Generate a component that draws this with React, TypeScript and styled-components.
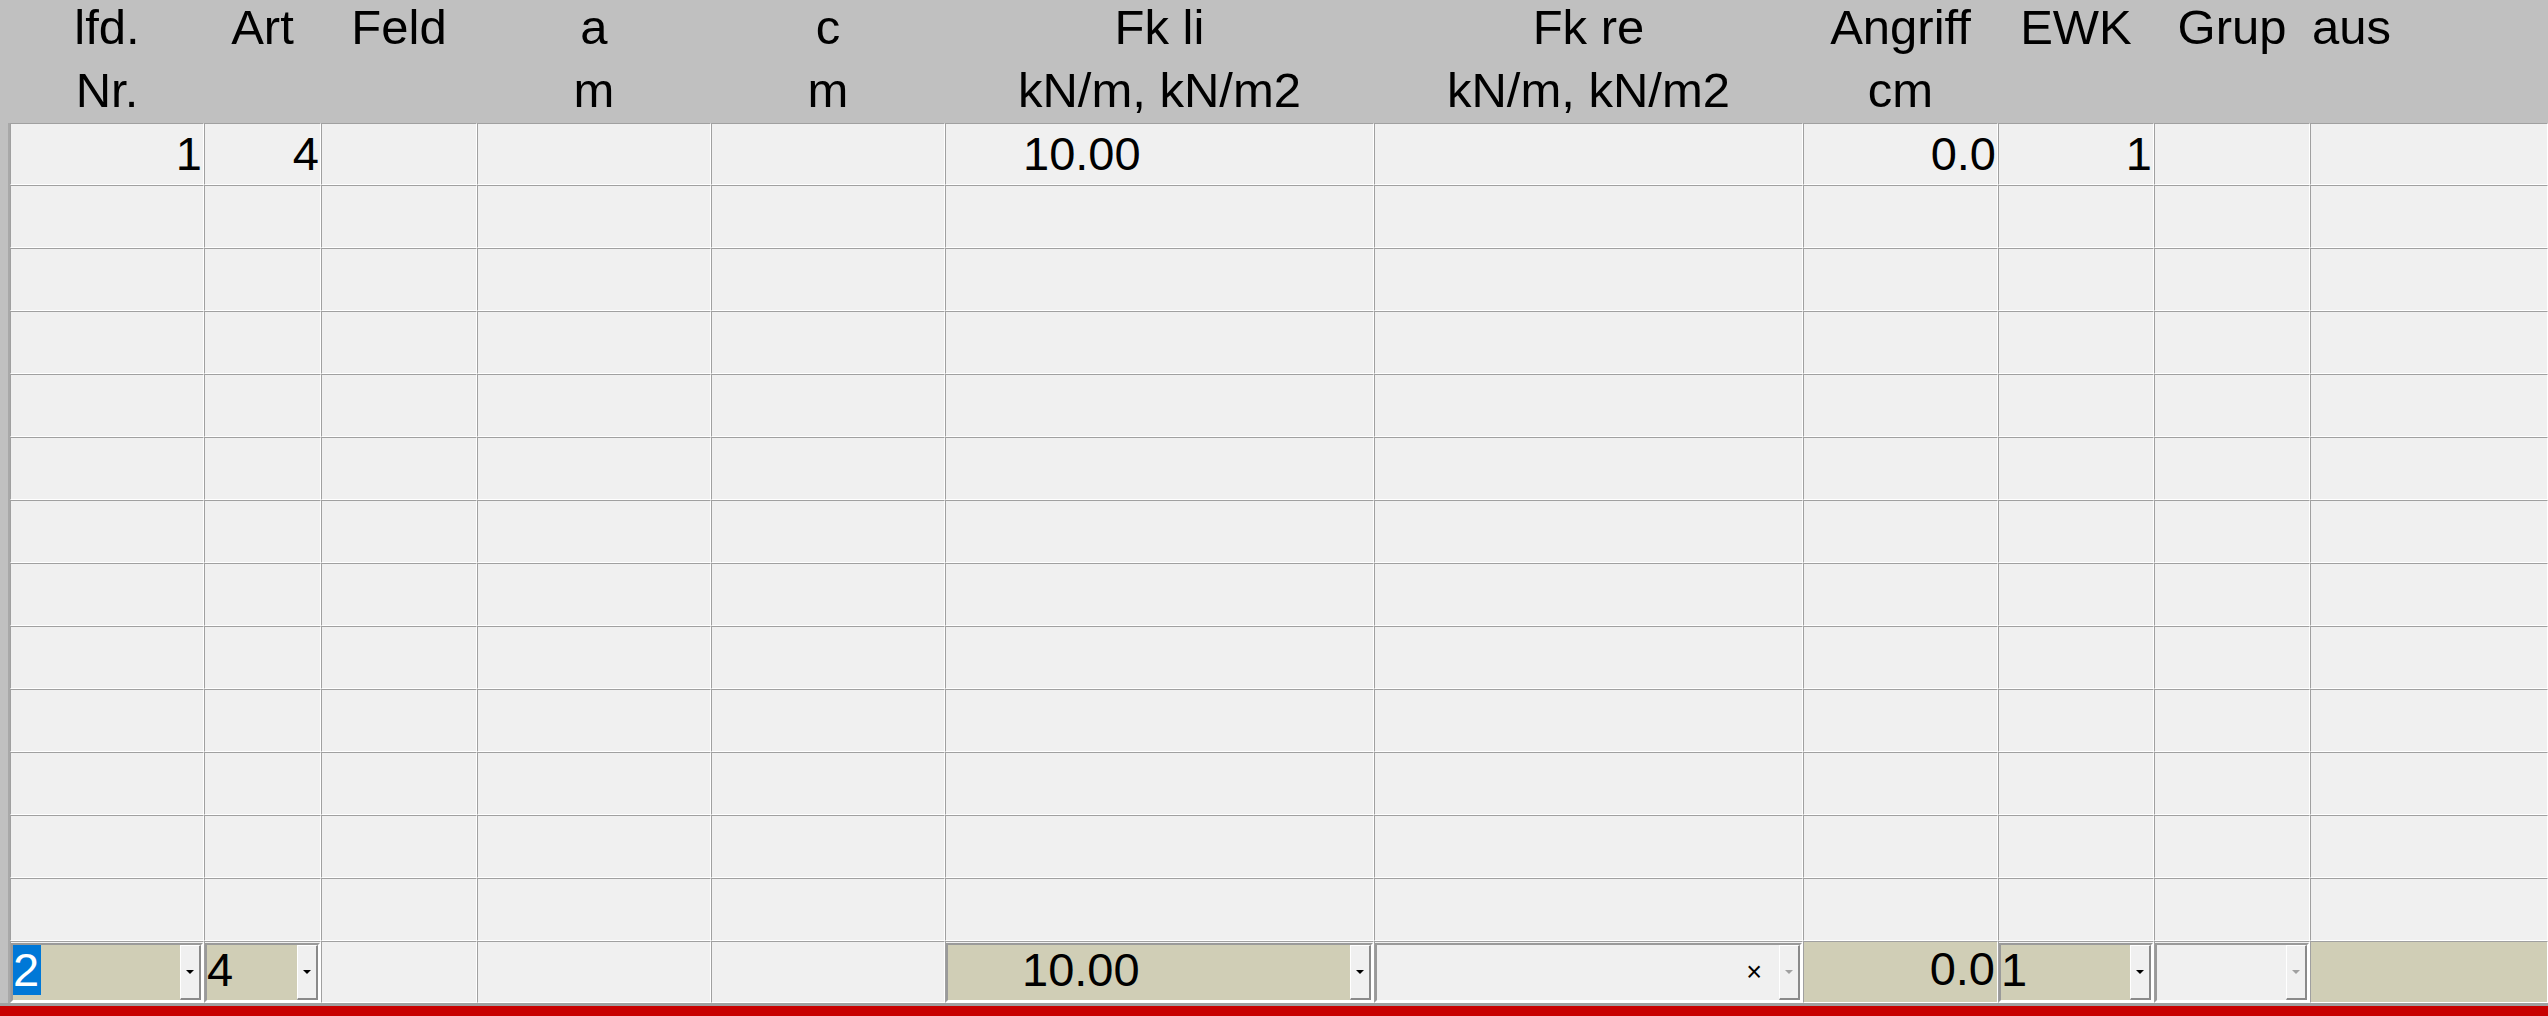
import React from "react";
import styled, { createGlobalStyle } from "styled-components";

const GlobalStyle = createGlobalStyle`
  html, body {
    margin: 0;
    padding: 0;
    background: #f0f0f0;
    overflow: hidden;
  }
  body {
    font-family: "Liberation Sans", Arial, sans-serif;
  }
`;

const COLS =
  "10px 194px 117px 156px 234px 234px 429px 429px 195px 156px 156px 1fr";

const BEIGE = "#d0ceb6";
const FACE = "#f0f0f0";
const LINE = "#a0a0a0";

const Screen = styled.div`
  width: 2548px;
  height: 1016px;
  display: flex;
  flex-direction: column;
  font-family: "Liberation Sans", Arial, sans-serif;
  font-size: 47px;
  color: #000;
  background: ${FACE};
  overflow: hidden;
`;

const HeaderRow = styled.div`
  display: grid;
  grid-template-columns: ${COLS};
  height: 123px;
  background: #c0c0c0;
  flex: none;
`;

const HeaderCell = styled.div<{ $align?: "left" | "center" }>`
  display: flex;
  flex-direction: column;
  align-items: ${(p) => (p.$align === "left" ? "flex-start" : "center")};
  padding-left: ${(p) => (p.$align === "left" ? 2 : 0)}px;
  font-size: 49px;
  line-height: 63px;
  margin-top: -4px;
  white-space: nowrap;
  overflow: visible;
`;

const Row = styled.div<{ $height: number }>`
  display: grid;
  grid-template-columns: ${COLS};
  height: ${(p) => p.$height}px;
  flex: none;
`;

const Handle = styled.div`
  background: #c0c0c0;
  box-shadow: inset -2px 0 0 #a8a8a8;
`;

const Cell = styled.div<{ $align?: "left" | "right"; $padLeft?: number }>`
  box-sizing: border-box;
  border-top: 1px solid ${LINE};
  border-bottom: 1px solid #fff;
  border-left: 1px solid ${LINE};
  border-right: 1px solid #fff;
  background: ${FACE};
  display: flex;
  align-items: center;
  justify-content: ${(p) => (p.$align === "left" ? "flex-start" : "flex-end")};
  padding: 0 1px 0 ${(p) => p.$padLeft ?? 0}px;
  line-height: 52px;
  white-space: nowrap;
  overflow: hidden;
`;

const EditCell = styled.div<{ $fill?: boolean }>`
  box-sizing: border-box;
  border-top: 1px solid ${LINE};
  border-bottom: 1px solid #fff;
  border-left: 1px solid ${LINE};
  border-right: 1px solid #fff;
  background: ${(p) => (p.$fill ? BEIGE : FACE)};
  display: flex;
  padding: 1px 0 0 0;
  white-space: nowrap;
  overflow: hidden;
`;

const Combo = styled.div`
  flex: 1;
  display: flex;
  border-style: solid;
  border-width: 2px;
  border-color: #9a9a9a #fff #fff #9a9a9a;
  min-width: 0;
`;

const ComboField = styled.div<{
  $tone: "beige" | "plain";
  $align?: "left" | "right";
  $padLeft?: number;
  $padRight?: number;
}>`
  flex: 1;
  display: flex;
  align-items: flex-start;
  justify-content: ${(p) => (p.$align === "right" ? "flex-end" : "flex-start")};
  background: ${(p) => (p.$tone === "beige" ? BEIGE : FACE)};
  padding: 0 ${(p) => p.$padRight ?? 0}px 0 ${(p) => p.$padLeft ?? 0}px;
  line-height: 50px;
  min-width: 0;
`;

const Value = styled.span<{ $selected?: boolean }>`
  display: inline-block;
  height: 50px;
  line-height: 50px;
  padding-right: ${(p) => (p.$selected ? 2 : 0)}px;
  background: ${(p) => (p.$selected ? "#0078d7" : "transparent")};
  color: ${(p) => (p.$selected ? "#fff" : "#000")};
`;

const Clear = styled.span`
  align-self: center;
  font-size: 27px;
  line-height: 27px;
  color: #000;
`;

const DropButton = styled.div`
  box-sizing: border-box;
  width: 21px;
  flex: none;
  background: ${FACE};
  border-top: 1px solid #fff;
  border-left: 1px solid #fff;
  border-right: 2px solid #8a8a8a;
  border-bottom: 2px solid #8a8a8a;
  display: flex;
  align-items: center;
  justify-content: center;
`;

const Arrow = styled.span<{ $disabled?: boolean }>`
  width: 0;
  height: 0;
  border-left: 4px solid transparent;
  border-right: 4px solid transparent;
  border-top: 4px solid ${(p) => (p.$disabled ? "#a0a0a0" : "#000")};
`;

const PlainField = styled.div<{ $align?: "left" | "right" }>`
  flex: 1;
  display: flex;
  align-items: flex-start;
  justify-content: ${(p) => (p.$align === "right" ? "flex-end" : "flex-start")};
  padding: 0 2px 0 0;
  line-height: 52px;
`;

const Footer = styled.div`
  flex: 1;
  border-top: 3px solid #a0a0a0;
  background: #c80000;
`;

type Col = {
  id: string;
  h1: string;
  h2?: string;
  headAlign?: "left" | "center";
};

const columns: Col[] = [
  { id: "nr", h1: "lfd.", h2: "Nr." },
  { id: "art", h1: "Art" },
  { id: "feld", h1: "Feld" },
  { id: "a", h1: "a", h2: "m" },
  { id: "c", h1: "c", h2: "m" },
  { id: "fkli", h1: "Fk li", h2: "kN/m, kN/m2" },
  { id: "fkre", h1: "Fk re", h2: "kN/m, kN/m2" },
  { id: "angriff", h1: "Angriff", h2: "cm" },
  { id: "ewk", h1: "EWK" },
  { id: "grup", h1: "Grup" },
  { id: "aus", h1: "aus", headAlign: "left" },
];

type RowData = Partial<Record<string, string>>;

const rows: RowData[] = [
  { nr: "1", art: "4", fkli: "10.00", angriff: "0.0", ewk: "1" },
  ...Array.from({ length: 12 }, () => ({})),
];

const cellAlign = (id: string): { align: "left" | "right"; pad: number } => {
  if (id === "fkli") return { align: "left", pad: 77 };
  return { align: "right", pad: 0 };
};

function ComboBox(props: {
  value?: string;
  tone: "beige" | "plain";
  align?: "left" | "right";
  padLeft?: number;
  selected?: boolean;
  disabled?: boolean;
  clear?: boolean;
}) {
  return (
    <Combo>
      <ComboField
        $tone={props.tone}
        $align={props.clear ? "right" : props.align}
        $padLeft={props.padLeft}
        $padRight={props.clear ? 17 : 0}
      >
        {props.clear ? (
          <Clear>×</Clear>
        ) : props.value ? (
          <Value $selected={props.selected}>{props.value}</Value>
        ) : null}
      </ComboField>
      <DropButton>
        <Arrow $disabled={props.disabled} />
      </DropButton>
    </Combo>
  );
}

export default function App() {
  return (
    <>
      <GlobalStyle />
      <Screen>
        <HeaderRow>
          <div />
          {columns.map((c) => (
            <HeaderCell key={c.id} $align={c.headAlign}>
              <span>{c.h1}</span>
              {c.h2 && <span>{c.h2}</span>}
            </HeaderCell>
          ))}
        </HeaderRow>

        {rows.map((r, i) => (
          <Row key={i} $height={i === 0 ? 62 : 63}>
            <Handle />
            {columns.map((c) => {
              const { align, pad } = cellAlign(c.id);
              return (
                <Cell key={c.id} $align={align} $padLeft={pad}>
                  {r[c.id] ?? ""}
                </Cell>
              );
            })}
          </Row>
        ))}

        <Row $height={62}>
          <Handle />
          <EditCell>
            <ComboBox value="2" tone="beige" selected />
          </EditCell>
          <EditCell>
            <ComboBox value="4" tone="beige" />
          </EditCell>
          <EditCell />
          <EditCell />
          <EditCell />
          <EditCell>
            <ComboBox value="10.00" tone="beige" padLeft={74} />
          </EditCell>
          <EditCell>
            <ComboBox tone="plain" clear disabled />
          </EditCell>
          <EditCell $fill>
            <PlainField $align="right">0.0</PlainField>
          </EditCell>
          <EditCell>
            <ComboBox value="1" tone="beige" />
          </EditCell>
          <EditCell>
            <ComboBox tone="plain" disabled />
          </EditCell>
          <EditCell $fill />
        </Row>

        <Footer />
      </Screen>
    </>
  );
}
